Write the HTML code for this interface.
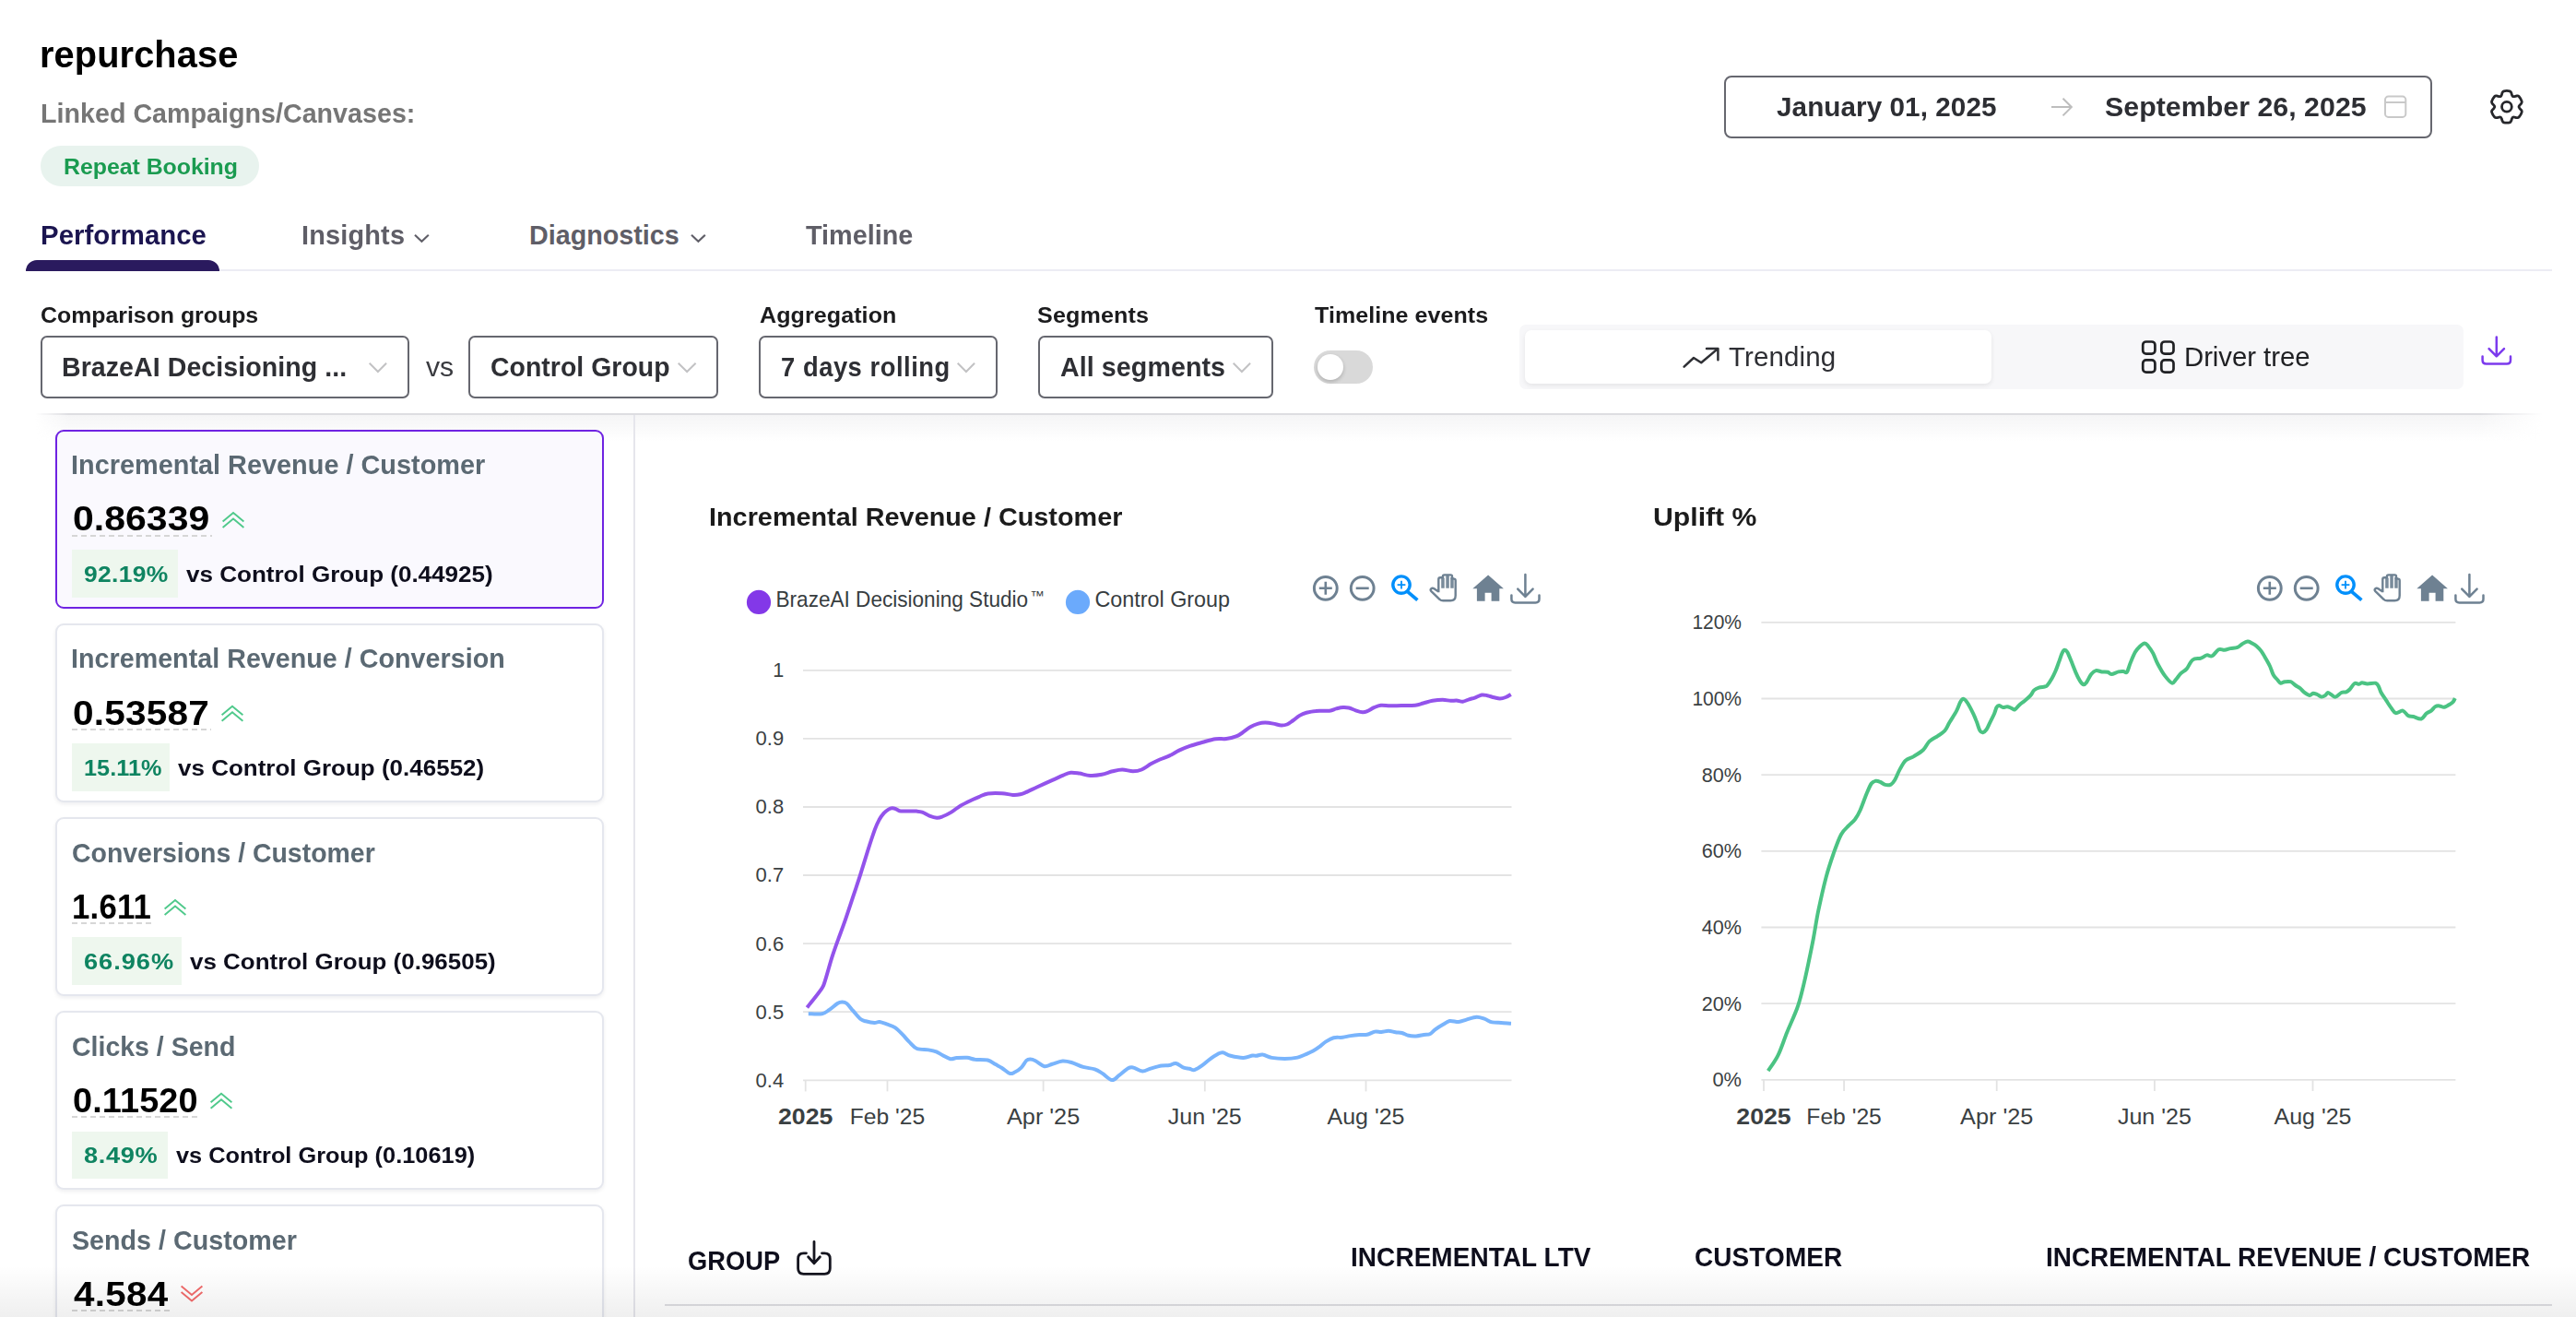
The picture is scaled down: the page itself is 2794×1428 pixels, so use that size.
<!DOCTYPE html>
<html lang="en"><head><meta charset="utf-8"><title>repurchase</title>
<style>
html,body{margin:0;padding:0;background:#fff;}
body{width:2794px;height:1428px;position:relative;overflow:hidden;font-family:"Liberation Sans",sans-serif;}
.t{position:absolute;white-space:nowrap;line-height:1;transform-origin:0 0;}
.abs{position:absolute;}
.sel{position:absolute;box-sizing:border-box;border:2px solid #66676f;border-radius:7px;background:#fff;}
.card{position:absolute;left:60px;width:595px;box-sizing:border-box;border:2px solid #e5e7ee;border-radius:9px;background:#fff;box-shadow:0 2px 4px rgba(20,20,40,.07);}
.card.on{border-color:#6f23e2;background:#faf9fe;box-shadow:none;}
.badge{position:absolute;background:#eef7ee;}
.dash{position:absolute;height:2px;background:repeating-linear-gradient(90deg,#d6d6d6 0 6px,transparent 6px 10px);}
svg{position:absolute;overflow:visible;}
</style></head><body>

<header>
<span class="t" id="h1" style="left:43.0px;top:38.6px;font-size:40.5px;font-weight:700;color:#000;transform:scaleX(0.9815);letter-spacing:0.111px;">repurchase</span>
<span class="t" id="lk" style="left:43.5px;top:106.5px;font-size:30.4px;font-weight:700;color:#767676;transform:scaleX(0.9427);letter-spacing:0.016px;">Linked Campaigns/Canvases:</span>
<div class="abs" style="left:43.7px;top:158.2px;width:237.3px;height:43.7px;border-radius:22px;background:#e8f3ee"></div>
<span class="t" id="pill" style="left:68.5px;top:170.0px;font-size:23.3px;font-weight:700;color:#1a9b50;transform:scaleX(1.0680);letter-spacing:-0.032px;">Repeat Booking</span>
<div class="sel" style="left:1870px;top:82px;width:768px;height:68px;border-radius:8px"></div>
<span class="t" id="d1" style="left:1927.0px;top:101.7px;font-size:28.6px;font-weight:700;color:#2d2e33;transform:scaleX(1.0380);letter-spacing:0.054px;">January 01, 2025</span>
<span class="t" id="d2" style="left:2282.5px;top:101.7px;font-size:28.6px;font-weight:700;color:#2d2e33;transform:scaleX(1.0598);letter-spacing:0.035px;">September 26, 2025</span>
<svg style="left:2220px;top:100px" width="32" height="32" viewBox="2220 100 32 32"><path d="M2225,116.1H2246.5M2237.5,106.8L2246.8,116.1L2237.5,125.4" fill="none" stroke="#bdbdbd" stroke-width="2"/></svg>
<svg style="left:2580px;top:98px" width="36" height="36" viewBox="2580 98 36 36"><rect x="2587" y="104.6" width="22.3" height="22.3" rx="3.5" fill="none" stroke="#c9c9c9" stroke-width="2"/><path d="M2587,111H2609.3" stroke="#c9c9c9" stroke-width="2"/></svg>
<svg style="left:2695px;top:92px" width="48" height="48" viewBox="2695 92 48 48"><path d="M2715.75,98.79C2717.07,98.50 2720.73,98.50 2722.05,98.79C2723.38,99.08 2723.31,99.85 2723.71,100.54C2724.12,101.24 2724.19,102.31 2724.48,102.96C2724.77,103.61 2724.99,104.19 2725.45,104.46C2725.91,104.72 2726.52,104.62 2727.23,104.55C2727.94,104.47 2728.90,104.00 2729.71,104.00C2730.51,104.01 2731.14,103.56 2732.06,104.56C2732.97,105.57 2734.80,108.73 2735.21,110.03C2735.62,111.32 2734.92,111.64 2734.52,112.34C2734.12,113.04 2733.23,113.64 2732.81,114.22C2732.39,114.79 2732.00,115.27 2732.00,115.80C2732.00,116.33 2732.39,116.81 2732.81,117.38C2733.23,117.96 2734.12,118.56 2734.52,119.26C2734.92,119.96 2735.62,120.28 2735.21,121.57C2734.80,122.87 2732.97,126.03 2732.06,127.04C2731.14,128.04 2730.51,127.59 2729.71,127.60C2728.90,127.60 2727.94,127.13 2727.23,127.05C2726.52,126.98 2725.91,126.88 2725.45,127.14C2724.99,127.41 2724.77,127.99 2724.48,128.64C2724.19,129.29 2724.12,130.36 2723.71,131.06C2723.31,131.75 2723.38,132.52 2722.05,132.81C2720.73,133.10 2717.07,133.10 2715.75,132.81C2714.42,132.52 2714.49,131.75 2714.09,131.06C2713.68,130.36 2713.61,129.29 2713.32,128.64C2713.03,127.99 2712.81,127.41 2712.35,127.14C2711.89,126.88 2711.28,126.98 2710.57,127.05C2709.86,127.13 2708.90,127.60 2708.09,127.60C2707.29,127.59 2706.66,128.04 2705.74,127.04C2704.83,126.03 2703.00,122.87 2702.59,121.57C2702.18,120.28 2702.88,119.96 2703.28,119.26C2703.68,118.56 2704.57,117.96 2704.99,117.38C2705.41,116.81 2705.80,116.33 2705.80,115.80C2705.80,115.27 2705.41,114.79 2704.99,114.22C2704.57,113.64 2703.68,113.04 2703.28,112.34C2702.88,111.64 2702.18,111.32 2702.59,110.03C2703.00,108.73 2704.83,105.57 2705.74,104.56C2706.66,103.56 2707.29,104.01 2708.09,104.00C2708.90,104.00 2709.86,104.47 2710.57,104.55C2711.28,104.62 2711.89,104.72 2712.35,104.46C2712.81,104.19 2713.03,103.61 2713.32,102.96C2713.61,102.31 2713.68,101.24 2714.09,100.54C2714.49,99.85 2714.42,99.08 2715.75,98.79Z" fill="none" stroke="#26272b" stroke-width="2.8" stroke-linejoin="round"/><circle cx="2718.9" cy="115.8" r="5.4" fill="none" stroke="#26272b" stroke-width="2.8"/></svg>
</header>
<nav>
<div class="abs" style="left:28px;top:291.8px;width:2740px;height:2px;background:#ececf4"></div>
<div class="abs" style="left:27.8px;top:281.7px;width:210.2px;height:12.2px;border-radius:12px 12px 0 0;background:#2a1a5e"></div>
<span class="t" id="tb1" style="left:43.5px;top:240.7px;font-size:28.7px;font-weight:700;color:#1b1550;transform:scaleX(1.0237);letter-spacing:0.040px;">Performance</span>
<span class="t" id="tb2" style="left:326.5px;top:240.7px;font-size:28.7px;font-weight:700;color:#5f5e67;transform:scaleX(1.0074);letter-spacing:0.170px;">Insights</span>
<span class="t" id="tb3" style="left:574.0px;top:240.7px;font-size:28.7px;font-weight:700;color:#5f5e67;">Diagnostics</span>
<span class="t" id="tb4" style="left:874.0px;top:240.7px;font-size:28.7px;font-weight:700;color:#5f5e67;transform:scaleX(1.0043);">Timeline</span>
<svg style="left:447.3px;top:250px" width="22" height="16" viewBox="447.3 250 22 16"><path d="M450.3,254.8L457.7,261.8L465.1,254.8" fill="none" stroke="#5f5e67" stroke-width="2.1"/></svg>
<svg style="left:746.6px;top:250px" width="22" height="16" viewBox="746.6 250 22 16"><path d="M749.6,254.8L757.0,261.8L764.4,254.8" fill="none" stroke="#5f5e67" stroke-width="2.1"/></svg>
</nav>
<section>
<span class="t" id="f1" style="left:43.5px;top:330.1px;font-size:24.6px;font-weight:700;color:#1b1b1d;transform:scaleX(1.0116);letter-spacing:-0.013px;">Comparison groups</span>
<span class="t" id="f2" style="left:824.0px;top:330.1px;font-size:24.6px;font-weight:700;color:#1b1b1d;transform:scaleX(1.0187);letter-spacing:0.080px;">Aggregation</span>
<span class="t" id="f3" style="left:1125.0px;top:330.1px;font-size:24.6px;font-weight:700;color:#1b1b1d;transform:scaleX(1.0214);letter-spacing:0.143px;">Segments</span>
<span class="t" id="f4" style="left:1426.0px;top:330.1px;font-size:24.6px;font-weight:700;color:#1b1b1d;transform:scaleX(1.0163);letter-spacing:0.071px;">Timeline events</span>
<div class="sel" style="left:44.1px;top:364.2px;width:399.6px;height:67.6px"></div>
<div class="sel" style="left:508.1px;top:364.2px;width:270.8px;height:67.6px"></div>
<div class="sel" style="left:823.2px;top:364.2px;width:258.6px;height:67.6px"></div>
<div class="sel" style="left:1126.1px;top:364.2px;width:254.6px;height:67.6px"></div>
<span class="t" id="s1" style="left:67.0px;top:383.5px;font-size:29px;font-weight:700;color:#2e2f34;transform:scaleX(0.9848);letter-spacing:0.055px;">BrazeAI Decisioning ...</span>
<span class="t" id="s2" style="left:532.0px;top:383.5px;font-size:29px;font-weight:700;color:#2e2f34;transform:scaleX(0.9782);letter-spacing:0.066px;">Control Group</span>
<span class="t" id="s3" style="left:846.5px;top:383.5px;font-size:29px;font-weight:700;color:#2e2f34;transform:scaleX(0.9422);letter-spacing:0.584px;">7 days rolling</span>
<span class="t" id="s4" style="left:1150.0px;top:383.5px;font-size:29px;font-weight:700;color:#2e2f34;transform:scaleX(0.9861);letter-spacing:0.091px;">All segments</span>
<svg style="left:398px;top:388px" width="26" height="20" viewBox="398 388 26 20"><path d="M400.7,393.8L409.9,403L419.1,393.8" fill="none" stroke="#c2c2c4" stroke-width="2"/></svg>
<svg style="left:732.9px;top:388px" width="26" height="20" viewBox="732.9 388 26 20"><path d="M735.6,393.8L745.05,403L754.5,393.8" fill="none" stroke="#c2c2c4" stroke-width="2"/></svg>
<svg style="left:1036.4px;top:388px" width="26" height="20" viewBox="1036.4 388 26 20"><path d="M1039.1000000000001,393.8L1048.3000000000002,403L1057.5,393.8" fill="none" stroke="#c2c2c4" stroke-width="2"/></svg>
<svg style="left:1335.1px;top:388px" width="26" height="20" viewBox="1335.1 388 26 20"><path d="M1337.8,393.8L1347.0,403L1356.2,393.8" fill="none" stroke="#c2c2c4" stroke-width="2"/></svg>
<span class="t" id="vs" style="left:461.5px;top:383.1px;font-size:29.5px;font-weight:400;color:#3a3b40;transform:scaleX(1.0241);letter-spacing:-0.200px;">vs</span>
<div class="abs" style="left:1425.4px;top:380px;width:63.6px;height:36px;border-radius:18px;background:#d9d9d9"></div>
<div class="abs" style="left:1428.9px;top:384px;width:28px;height:28px;border-radius:14px;background:#fff;box-shadow:0 2px 4px rgba(0,0,0,.2)"></div>
<div class="abs" style="left:1648.2px;top:352.1px;width:1023.8px;height:69.9px;border-radius:7px;background:#f7f7f9"></div>
<div class="abs" style="left:1654px;top:358px;width:505.9px;height:57.7px;border-radius:7px;background:#fff;box-shadow:0 2px 5px rgba(0,0,0,.08)"></div>
<svg style="left:1820px;top:370px" width="50" height="36" viewBox="1820 370 50 36"><path d="M1826.6,397.7L1837,388L1845.2,393.2L1862.6,378.6M1851,377.9H1863.4V390.2" fill="none" stroke="#2e2f34" stroke-width="2.5" stroke-linecap="round" stroke-linejoin="round"/></svg>
<span class="t" id="sg1" style="left:1875.0px;top:372.8px;font-size:28.7px;font-weight:400;color:#2e2f34;transform:scaleX(1.0288);letter-spacing:0.116px;">Trending</span>
<svg style="left:2318px;top:364px" width="46" height="46" viewBox="2318 364 46 46"><g fill="none" stroke="#202124" stroke-width="2.7"><rect x="2324.2" y="370.5" width="13.2" height="13.2" rx="3.6"/><rect x="2344.3" y="370.5" width="13.2" height="13.2" rx="3.6"/><rect x="2324.2" y="390.4" width="13.2" height="13.2" rx="3.6"/><rect x="2344.3" y="390.4" width="13.2" height="13.2" rx="3.6"/></g></svg>
<span class="t" id="sg2" style="left:2369.0px;top:372.8px;font-size:28.7px;font-weight:400;color:#202124;transform:scaleX(1.0221);letter-spacing:-0.040px;">Driver tree</span>
<svg style="left:2686px;top:358.9px" width="44" height="42" viewBox="2686 358 44 42"><path d="M2707.8,364.5V385.2M2699.6,377.2L2707.8,385.4L2716,377.2M2692.6,385.5V389.5Q2692.6,393.5 2696.6,393.5H2719Q2723,393.5 2723,389.5V385.5" fill="none" stroke="#7c3aed" stroke-width="2.5" stroke-linecap="round" stroke-linejoin="round"/></svg>
<div class="abs" style="left:30px;top:447.8px;width:2740px;height:30px;background:linear-gradient(180deg,#dddde1 0,#dddde1 2px,#f5f5f6 2.5px,rgba(255,255,255,0) 100%);-webkit-mask-image:linear-gradient(90deg,transparent 8px,#000 45px,#000 2660px,transparent 2728px);mask-image:linear-gradient(90deg,transparent 8px,#000 45px,#000 2660px,transparent 2728px)"></div>
</section>
<div class="abs" style="left:687px;top:450px;width:2px;height:980px;background:#e6e6ec"></div>
<aside>
<div class="card on" style="top:465.9px;height:194px"></div>
<span class="t" id="c0t" style="left:77.0px;top:489.4px;font-size:29.4px;font-weight:700;color:#5b6973;transform:scaleX(0.9824);">Incremental Revenue / Customer</span>
<span class="t" id="c0v" style="left:78.5px;top:545.4px;font-size:36.4px;font-weight:700;color:#000;transform:scaleX(1.1254);letter-spacing:0.033px;">0.86339</span>
<div class="dash" style="left:78px;top:579.8px;width:151.8px"></div>
<svg style="left:239.3px;top:552.9px" width="28" height="22" viewBox="239.3 552.9 28 22"><path d="M241.9,565.3L253.3,555.8L264.7,565.3M241.9,571.8L253.3,562.3L264.7,571.8" fill="none" stroke="#4fc98b" stroke-width="1.9"/></svg>
<div class="badge" style="left:78px;top:596.3px;width:114.6px;height:51.4px"></div>
<span class="t" id="c0p" style="left:90.5px;top:610.5px;font-size:24.1px;font-weight:700;color:#0f8461;transform:scaleX(1.0963);letter-spacing:0.320px;">92.19%</span>
<span class="t" id="c0s" style="left:201.5px;top:610.5px;font-size:24.2px;font-weight:700;color:#0e0e1c;transform:scaleX(1.0776);letter-spacing:-0.016px;">vs Control Group (0.44925)</span>
<div class="card" style="top:676.0px;height:194px"></div>
<span class="t" id="c1t" style="left:77.0px;top:699.4px;font-size:29.4px;font-weight:700;color:#5b6973;transform:scaleX(0.9749);letter-spacing:0.032px;">Incremental Revenue / Conversion</span>
<span class="t" id="c1v" style="left:78.5px;top:755.5px;font-size:36.4px;font-weight:700;color:#000;transform:scaleX(1.1154);letter-spacing:0.167px;">0.53587</span>
<div class="dash" style="left:78px;top:789.8px;width:150.5px"></div>
<svg style="left:238.0px;top:763.0px" width="28" height="22" viewBox="238.0 763.0 28 22"><path d="M240.6,775.35L252.0,765.85L263.4,775.35M240.6,781.85L252.0,772.35L263.4,781.85" fill="none" stroke="#4fc98b" stroke-width="1.9"/></svg>
<div class="badge" style="left:78px;top:806.3px;width:106.2px;height:51.4px"></div>
<span class="t" id="c1p" style="left:90.5px;top:820.6px;font-size:24.1px;font-weight:700;color:#0f8461;transform:scaleX(1.0481);letter-spacing:0.040px;">15.11%</span>
<span class="t" id="c1s" style="left:192.5px;top:820.5px;font-size:24.2px;font-weight:700;color:#0e0e1c;transform:scaleX(1.0718);letter-spacing:0.032px;">vs Control Group (0.46552)</span>
<div class="card" style="top:886.0px;height:194px"></div>
<span class="t" id="c2t" style="left:78.0px;top:909.5px;font-size:29.4px;font-weight:700;color:#5b6973;transform:scaleX(0.9676);">Conversions / Customer</span>
<span class="t" id="c2v" style="left:77.5px;top:965.5px;font-size:36.4px;font-weight:700;color:#000;transform:scaleX(0.9563);letter-spacing:0.200px;">1.611</span>
<div class="dash" style="left:78px;top:999.9px;width:88.7px"></div>
<svg style="left:176.2px;top:973.0px" width="28" height="22" viewBox="176.2 973.0 28 22"><path d="M178.79999999999998,985.4L190.2,975.9L201.6,985.4M178.79999999999998,991.9L190.2,982.4L201.6,991.9" fill="none" stroke="#4fc98b" stroke-width="1.9"/></svg>
<div class="badge" style="left:78px;top:1016.4px;width:119.1px;height:51.4px"></div>
<span class="t" id="c2p" style="left:90.5px;top:1030.6px;font-size:24.1px;font-weight:700;color:#0f8461;transform:scaleX(1.1300);letter-spacing:0.840px;">66.96%</span>
<span class="t" id="c2s" style="left:206.0px;top:1030.6px;font-size:24.2px;font-weight:700;color:#0e0e1c;transform:scaleX(1.0709);letter-spacing:0.024px;">vs Control Group (0.96505)</span>
<div class="card" style="top:1096.1px;height:194px"></div>
<span class="t" id="c3t" style="left:78.0px;top:1119.5px;font-size:29.4px;font-weight:700;color:#5b6973;transform:scaleX(0.9694);">Clicks / Send</span>
<span class="t" id="c3v" style="left:78.5px;top:1175.6px;font-size:36.4px;font-weight:700;color:#000;transform:scaleX(1.0406);letter-spacing:0.132px;">0.11520</span>
<div class="dash" style="left:78px;top:1210.0px;width:138.7px"></div>
<svg style="left:226.2px;top:1183.1px" width="28" height="22" viewBox="226.2 1183.1 28 22"><path d="M228.79999999999998,1195.4500000000003L240.2,1185.9500000000003L251.6,1195.4500000000003M228.79999999999998,1201.9500000000003L240.2,1192.4500000000003L251.6,1201.9500000000003" fill="none" stroke="#4fc98b" stroke-width="1.9"/></svg>
<div class="badge" style="left:78px;top:1226.5px;width:103.9px;height:51.4px"></div>
<span class="t" id="c3p" style="left:90.5px;top:1240.7px;font-size:24.1px;font-weight:700;color:#0f8461;transform:scaleX(1.1300);letter-spacing:0.550px;">8.49%</span>
<span class="t" id="c3s" style="left:191.0px;top:1240.6px;font-size:24.2px;font-weight:700;color:#0e0e1c;transform:scaleX(1.0466);letter-spacing:0.024px;">vs Control Group (0.10619)</span>
<div class="card" style="top:1306.1px;height:194px"></div>
<span class="t" id="c4t" style="left:78.0px;top:1329.6px;font-size:29.4px;font-weight:700;color:#5b6973;transform:scaleX(0.9743);letter-spacing:0.026px;">Sends / Customer</span>
<span class="t" id="c4v" style="left:79.5px;top:1385.6px;font-size:36.4px;font-weight:700;color:#000;transform:scaleX(1.1087);letter-spacing:0.250px;">4.584</span>
<div class="dash" style="left:78px;top:1420.0px;width:107.5px"></div>
<svg style="left:194.1px;top:1392.3px" width="28" height="22" viewBox="194.1 1392.3 28 22"><path d="M196.7,1394.8999999999999L208.1,1404.3999999999999L219.5,1394.8999999999999M196.7,1401.3999999999999L208.1,1410.8999999999999L219.5,1401.3999999999999" fill="none" stroke="#f26b6b" stroke-width="1.9"/></svg>
</aside>
<main>
<span class="t" id="ct1" style="left:768.5px;top:546.3px;font-size:28.3px;font-weight:700;color:#1b1b1b;transform:scaleX(1.0155);letter-spacing:0.042px;">Incremental Revenue / Customer</span>
<span class="t" id="ct2" style="left:1792.5px;top:546.3px;font-size:28.3px;font-weight:700;color:#1b1b1b;transform:scaleX(1.0673);">Uplift %</span>
<svg style="left:0;top:0" width="2794" height="1428" viewBox="0 0 2794 1428" font-family="Liberation Sans, sans-serif">
<path d="M871,726.8H1639.5" stroke="#e3e3e3" stroke-width="1.8"/>
<text x="850.2" y="734.2" text-anchor="end" font-size="21.6" fill="#3a4042">1</text>
<path d="M871,800.9H1639.5" stroke="#e3e3e3" stroke-width="1.8"/>
<text x="850.2" y="808.3" text-anchor="end" font-size="21.6" fill="#3a4042" textLength="30.6" lengthAdjust="spacingAndGlyphs">0.9</text>
<path d="M871,875.0H1639.5" stroke="#e3e3e3" stroke-width="1.8"/>
<text x="850.2" y="882.4" text-anchor="end" font-size="21.6" fill="#3a4042" textLength="30.6" lengthAdjust="spacingAndGlyphs">0.8</text>
<path d="M871,949.0H1639.5" stroke="#e3e3e3" stroke-width="1.8"/>
<text x="850.2" y="956.4" text-anchor="end" font-size="21.6" fill="#3a4042" textLength="30.6" lengthAdjust="spacingAndGlyphs">0.7</text>
<path d="M871,1023.1H1639.5" stroke="#e3e3e3" stroke-width="1.8"/>
<text x="850.2" y="1030.5" text-anchor="end" font-size="21.6" fill="#3a4042" textLength="30.6" lengthAdjust="spacingAndGlyphs">0.6</text>
<path d="M871,1097.2H1639.5" stroke="#e3e3e3" stroke-width="1.8"/>
<text x="850.2" y="1104.6" text-anchor="end" font-size="21.6" fill="#3a4042" textLength="30.6" lengthAdjust="spacingAndGlyphs">0.5</text>
<path d="M871,1171.3H1639.5" stroke="#e3e3e3" stroke-width="1.8"/>
<text x="850.2" y="1178.7" text-anchor="end" font-size="21.6" fill="#3a4042" textLength="30.6" lengthAdjust="spacingAndGlyphs">0.4</text>
<path d="M873.7,1171.3V1183.4" stroke="#e3e3e3" stroke-width="1.8"/>
<path d="M962.5,1171.3V1183.4" stroke="#e3e3e3" stroke-width="1.8"/>
<path d="M1131.6,1171.3V1183.4" stroke="#e3e3e3" stroke-width="1.8"/>
<path d="M1306.8,1171.3V1183.4" stroke="#e3e3e3" stroke-width="1.8"/>
<path d="M1481.5,1171.3V1183.4" stroke="#e3e3e3" stroke-width="1.8"/>
<text x="873.7" y="1219" text-anchor="middle" font-size="24" font-weight="700" fill="#3a4042" textLength="59.4" lengthAdjust="spacingAndGlyphs">2025</text>
<text x="962.5" y="1219" text-anchor="middle" font-size="24" fill="#3a4042" textLength="81.5" lengthAdjust="spacingAndGlyphs">Feb '25</text>
<text x="1131.6" y="1219" text-anchor="middle" font-size="24" fill="#3a4042" textLength="79.2" lengthAdjust="spacingAndGlyphs">Apr '25</text>
<text x="1306.8" y="1219" text-anchor="middle" font-size="24" fill="#3a4042" textLength="80" lengthAdjust="spacingAndGlyphs">Jun '25</text>
<text x="1481.5" y="1219" text-anchor="middle" font-size="24" fill="#3a4042" textLength="84" lengthAdjust="spacingAndGlyphs">Aug '25</text>
<path d="M1910.4,674.8H2663.4" stroke="#e3e3e3" stroke-width="1.8"/>
<text x="1889" y="682.2" text-anchor="end" font-size="21.6" fill="#3a4042" textLength="53.6" lengthAdjust="spacingAndGlyphs">120%</text>
<path d="M1910.4,757.5H2663.4" stroke="#e3e3e3" stroke-width="1.8"/>
<text x="1889" y="764.9" text-anchor="end" font-size="21.6" fill="#3a4042" textLength="53.6" lengthAdjust="spacingAndGlyphs">100%</text>
<path d="M1910.4,840.2H2663.4" stroke="#e3e3e3" stroke-width="1.8"/>
<text x="1889" y="847.6" text-anchor="end" font-size="21.6" fill="#3a4042" textLength="43.2" lengthAdjust="spacingAndGlyphs">80%</text>
<path d="M1910.4,922.8H2663.4" stroke="#e3e3e3" stroke-width="1.8"/>
<text x="1889" y="930.2" text-anchor="end" font-size="21.6" fill="#3a4042" textLength="43.2" lengthAdjust="spacingAndGlyphs">60%</text>
<path d="M1910.4,1005.5H2663.4" stroke="#e3e3e3" stroke-width="1.8"/>
<text x="1889" y="1012.9" text-anchor="end" font-size="21.6" fill="#3a4042" textLength="43.2" lengthAdjust="spacingAndGlyphs">40%</text>
<path d="M1910.4,1088.2H2663.4" stroke="#e3e3e3" stroke-width="1.8"/>
<text x="1889" y="1095.6" text-anchor="end" font-size="21.6" fill="#3a4042" textLength="43.2" lengthAdjust="spacingAndGlyphs">20%</text>
<path d="M1910.4,1170.9H2663.4" stroke="#e3e3e3" stroke-width="1.8"/>
<text x="1889" y="1178.3" text-anchor="end" font-size="21.6" fill="#3a4042" textLength="31.5" lengthAdjust="spacingAndGlyphs">0%</text>
<path d="M1913,1170.9V1183" stroke="#e3e3e3" stroke-width="1.8"/>
<path d="M2000.1,1170.9V1183" stroke="#e3e3e3" stroke-width="1.8"/>
<path d="M2165.7,1170.9V1183" stroke="#e3e3e3" stroke-width="1.8"/>
<path d="M2336.9,1170.9V1183" stroke="#e3e3e3" stroke-width="1.8"/>
<path d="M2508.5,1170.9V1183" stroke="#e3e3e3" stroke-width="1.8"/>
<text x="1913" y="1219" text-anchor="middle" font-size="24" font-weight="700" fill="#3a4042" textLength="59.4" lengthAdjust="spacingAndGlyphs">2025</text>
<text x="2000.1" y="1219" text-anchor="middle" font-size="24" fill="#3a4042" textLength="81.5" lengthAdjust="spacingAndGlyphs">Feb '25</text>
<text x="2165.7" y="1219" text-anchor="middle" font-size="24" fill="#3a4042" textLength="79.2" lengthAdjust="spacingAndGlyphs">Apr '25</text>
<text x="2336.9" y="1219" text-anchor="middle" font-size="24" fill="#3a4042" textLength="80" lengthAdjust="spacingAndGlyphs">Jun '25</text>
<text x="2508.5" y="1219" text-anchor="middle" font-size="24" fill="#3a4042" textLength="84" lengthAdjust="spacingAndGlyphs">Aug '25</text>
<path d="M875.4,1092.5C877.9,1089.2 887.4,1077.5 890.6,1072.8C893.8,1068.1 892.6,1070.2 894.6,1064.3C896.6,1058.4 900.0,1045.3 902.5,1037.6C905.0,1029.9 906.9,1024.8 909.4,1017.9C911.9,1011.0 914.7,1003.7 917.3,996.1C919.9,988.5 922.6,980.3 925.2,972.4C927.8,964.5 930.5,956.9 933.1,948.7C935.7,940.5 938.4,931.3 941.0,923.1C943.6,914.9 946.8,905.2 948.9,899.4C951.0,893.6 952.2,891.5 953.8,888.5C955.4,885.5 957.1,883.4 958.7,881.6C960.4,879.8 962.2,878.5 963.7,877.6C965.2,876.7 966.3,876.4 967.6,876.3C968.9,876.2 970.3,876.6 971.6,877.1C972.9,877.6 973.7,878.8 975.5,879.2C977.3,879.6 979.3,879.5 982.4,879.6C985.5,879.7 991.3,879.4 994.3,879.6C997.3,879.8 997.9,879.8 1000.2,880.6C1002.5,881.4 1005.5,883.6 1008.1,884.6C1010.7,885.6 1013.7,886.6 1016.0,886.7C1018.3,886.9 1019.3,886.5 1021.9,885.5C1024.5,884.5 1028.5,882.6 1031.8,880.6C1035.1,878.6 1037.8,876.0 1041.7,873.7C1045.7,871.4 1052.0,868.5 1055.5,866.8C1059.0,865.1 1060.3,864.6 1063.0,863.5C1065.7,862.4 1067.6,860.9 1071.6,860.4C1075.6,859.9 1082.3,860.0 1086.8,860.2C1091.3,860.5 1095.1,861.7 1098.4,861.9C1101.7,862.1 1104.3,861.8 1106.6,861.3C1108.9,860.8 1109.3,860.6 1112.4,859.2C1115.5,857.9 1120.4,855.4 1125.2,853.2C1130.0,851.0 1136.8,848.0 1141.5,845.9C1146.2,843.8 1149.9,842.0 1153.2,840.6C1156.5,839.2 1158.4,838.1 1161.3,837.8C1164.2,837.5 1167.1,838.1 1170.6,838.6C1174.1,839.1 1178.2,840.7 1182.3,840.9C1186.4,841.1 1191.0,840.6 1195.1,839.8C1199.2,839.0 1203.0,837.2 1206.7,836.3C1210.4,835.4 1213.5,834.5 1217.2,834.5C1220.9,834.5 1225.4,836.3 1228.9,836.3C1232.4,836.3 1234.9,835.9 1238.2,834.5C1241.5,833.1 1245.4,829.9 1248.7,828.1C1252.0,826.3 1254.7,825.0 1258.0,823.5C1261.3,822.0 1265.0,821.0 1268.5,819.4C1272.0,817.8 1275.2,815.4 1278.9,813.6C1282.6,811.9 1286.3,810.4 1290.6,808.9C1294.9,807.4 1299.9,806.1 1304.6,804.8C1309.2,803.5 1314.2,801.9 1318.5,801.3C1322.8,800.7 1326.5,801.5 1330.2,801.0C1333.9,800.5 1337.8,799.5 1340.7,798.4C1343.6,797.3 1344.9,796.2 1347.5,794.5C1350.1,792.8 1353.2,789.9 1356.1,788.3C1359.0,786.6 1362.1,785.4 1364.8,784.6C1367.5,783.8 1369.6,783.6 1372.3,783.6C1375.0,783.6 1378.1,784.1 1381.0,784.6C1383.9,785.1 1387.2,786.4 1389.7,786.5C1392.2,786.6 1393.8,786.3 1395.9,785.5C1398.0,784.7 1399.8,783.1 1402.1,781.5C1404.4,779.9 1407.1,777.4 1409.6,775.9C1412.1,774.4 1414.1,773.6 1417.0,772.8C1419.9,772.0 1422.8,771.2 1427.0,770.9C1431.2,770.5 1438.2,771.1 1441.9,770.7C1445.6,770.3 1446.8,769.0 1449.3,768.4C1451.8,767.8 1454.5,767.1 1456.8,767.0C1459.1,766.9 1460.7,767.0 1463.0,767.5C1465.3,768.0 1467.9,769.5 1470.4,770.3C1472.9,771.1 1475.8,772.1 1477.9,772.2C1480.0,772.4 1480.8,772.0 1482.9,771.2C1485.0,770.4 1487.8,768.3 1490.3,767.2C1492.8,766.1 1494.9,765.0 1497.8,764.7C1500.7,764.4 1504.0,765.2 1507.7,765.3C1511.4,765.3 1515.5,765.1 1520.1,765.0C1524.6,764.9 1531.1,765.1 1535.0,764.7C1538.9,764.3 1540.6,763.3 1543.7,762.5C1546.8,761.7 1550.2,760.4 1553.7,759.8C1557.2,759.2 1561.5,758.8 1564.8,758.8C1568.1,758.8 1571.0,759.7 1573.5,759.8C1576.0,759.9 1577.6,759.4 1579.8,759.5C1582.0,759.6 1584.3,760.9 1586.6,760.7C1588.9,760.5 1591.2,759.0 1593.4,758.3C1595.6,757.6 1597.3,757.4 1599.6,756.6C1601.9,755.8 1604.8,753.9 1607.1,753.5C1609.4,753.1 1611.0,753.7 1613.3,754.2C1615.6,754.7 1618.4,755.8 1620.7,756.3C1623.0,756.8 1624.8,757.5 1626.9,757.5C1629.0,757.5 1631.2,756.8 1633.2,756.0C1635.2,755.2 1637.9,753.4 1638.8,752.9" fill="none" stroke="#9353eb" stroke-width="4" stroke-linecap="butt" stroke-linejoin="round"/>
<path d="M876.8,1099.2C879.3,1099.2 887.8,1099.9 891.6,1099.2C895.4,1098.5 896.7,1096.8 899.5,1094.9C902.3,1093.0 906.1,1089.4 908.4,1088.0C910.7,1086.6 911.6,1086.6 913.3,1086.6C914.9,1086.6 916.3,1086.5 918.3,1088.0C920.3,1089.5 922.7,1093.1 925.2,1095.9C927.7,1098.7 930.8,1102.9 933.1,1104.8C935.4,1106.7 936.5,1106.6 939.0,1107.3C941.5,1108.0 945.9,1109.0 948.4,1109.1C950.9,1109.2 951.7,1107.7 954.0,1108.0C956.3,1108.3 959.6,1109.7 962.4,1110.7C965.2,1111.7 967.9,1112.3 970.7,1114.2C973.5,1116.1 976.5,1119.3 979.1,1121.9C981.7,1124.5 983.5,1127.1 986.1,1129.6C988.7,1132.1 991.0,1135.5 994.5,1137.0C998.0,1138.5 1003.6,1137.8 1007.1,1138.4C1010.6,1139.0 1012.9,1139.4 1015.5,1140.4C1018.1,1141.4 1020.0,1143.0 1022.5,1144.3C1025.0,1145.6 1028.2,1147.7 1030.8,1148.2C1033.3,1148.7 1034.8,1147.3 1037.8,1147.1C1040.8,1146.9 1045.7,1146.5 1049.0,1146.8C1052.3,1147.1 1053.7,1148.3 1057.4,1148.8C1061.1,1149.2 1067.7,1148.6 1071.4,1149.5C1075.1,1150.4 1077.2,1152.7 1079.7,1154.1C1082.2,1155.5 1084.1,1156.4 1086.7,1158.0C1089.3,1159.6 1092.8,1163.2 1095.1,1163.9C1097.4,1164.7 1098.6,1163.5 1100.7,1162.5C1102.8,1161.5 1105.6,1159.7 1107.7,1157.6C1109.8,1155.5 1111.7,1151.4 1113.3,1149.9C1114.9,1148.4 1115.9,1148.5 1117.5,1148.5C1119.1,1148.5 1120.5,1148.9 1123.1,1150.2C1125.7,1151.5 1129.9,1155.6 1132.9,1156.2C1135.9,1156.8 1138.0,1154.7 1141.2,1153.8C1144.5,1152.9 1148.9,1150.9 1152.4,1150.6C1155.9,1150.3 1158.5,1151.0 1162.2,1152.0C1165.9,1153.0 1170.6,1155.7 1174.8,1156.9C1179.0,1158.1 1183.9,1158.2 1187.4,1159.4C1190.9,1160.6 1192.6,1162.0 1195.7,1163.9C1198.8,1165.9 1203.2,1170.8 1206.2,1171.1C1209.2,1171.4 1211.0,1168.0 1213.9,1165.9C1216.8,1163.8 1221.1,1159.7 1223.7,1158.3C1226.3,1156.9 1226.7,1157.1 1229.3,1157.6C1231.9,1158.1 1235.8,1161.4 1239.1,1161.5C1242.3,1161.6 1245.3,1159.3 1248.8,1158.3C1252.3,1157.3 1256.7,1156.0 1260.0,1155.5C1263.3,1155.0 1265.8,1155.4 1268.4,1155.0C1271.0,1154.6 1272.8,1152.7 1275.4,1153.1C1278.0,1153.5 1281.4,1156.7 1283.8,1157.6C1286.2,1158.5 1288.0,1158.3 1290.0,1158.7C1292.0,1159.1 1293.3,1160.7 1295.6,1160.1C1297.9,1159.5 1301.2,1157.2 1304.0,1155.2C1306.8,1153.2 1309.6,1150.3 1312.4,1148.3C1315.2,1146.2 1318.4,1144.1 1320.7,1142.9C1323.0,1141.7 1324.0,1141.0 1326.3,1141.3C1328.6,1141.6 1331.0,1143.9 1334.7,1144.8C1338.4,1145.7 1344.7,1147.0 1348.7,1146.9C1352.7,1146.9 1356.2,1144.8 1358.5,1144.5C1360.8,1144.2 1360.8,1145.0 1362.7,1144.8C1364.6,1144.6 1366.9,1143.2 1369.7,1143.6C1372.5,1143.9 1375.5,1146.2 1379.4,1146.9C1383.4,1147.6 1388.7,1148.0 1393.4,1148.0C1398.1,1148.0 1403.7,1147.4 1407.4,1146.6C1411.1,1145.8 1413.0,1144.6 1415.8,1143.4C1418.6,1142.2 1421.7,1141.0 1424.2,1139.6C1426.8,1138.2 1428.8,1136.7 1431.1,1135.0C1433.4,1133.3 1435.5,1131.0 1438.1,1129.4C1440.7,1127.8 1443.5,1126.0 1446.5,1125.2C1449.5,1124.4 1453.3,1125.2 1456.3,1124.8C1459.3,1124.4 1461.7,1123.6 1464.7,1123.1C1467.7,1122.6 1471.5,1122.2 1474.5,1122.0C1477.5,1121.8 1480.1,1122.3 1482.9,1121.7C1485.7,1121.1 1488.7,1119.1 1491.2,1118.6C1493.8,1118.1 1495.8,1119.0 1498.2,1118.9C1500.7,1118.8 1503.3,1117.8 1505.9,1117.8C1508.5,1117.8 1511.1,1118.8 1513.6,1119.2C1516.0,1119.6 1518.3,1119.4 1520.6,1120.0C1522.9,1120.6 1525.0,1122.2 1527.6,1122.8C1530.2,1123.4 1533.2,1123.5 1536.0,1123.4C1538.8,1123.3 1541.8,1122.4 1544.3,1122.0C1546.8,1121.6 1549.2,1122.0 1551.3,1121.0C1553.4,1120.0 1554.6,1117.8 1556.9,1116.1C1559.2,1114.4 1562.7,1112.3 1565.3,1110.8C1567.9,1109.3 1569.5,1107.5 1572.3,1107.0C1575.1,1106.5 1579.1,1108.2 1582.1,1108.0C1585.1,1107.8 1587.2,1106.5 1590.5,1105.6C1593.8,1104.7 1598.3,1102.9 1601.6,1102.8C1604.8,1102.7 1607.2,1103.8 1610.0,1104.7C1612.8,1105.6 1615.4,1107.7 1618.4,1108.4C1621.4,1109.1 1624.8,1108.7 1628.2,1108.9C1631.6,1109.1 1637.2,1109.7 1639.0,1109.8" fill="none" stroke="#79b4fc" stroke-width="4" stroke-linejoin="round"/>
<path d="M1917.8,1161.1C1919.6,1158.2 1925.3,1150.9 1928.7,1143.9C1932.1,1136.9 1934.9,1127.7 1938.3,1119.3C1941.7,1110.9 1946.5,1100.8 1949.2,1093.3C1951.9,1085.8 1952.7,1082.4 1954.7,1074.2C1956.8,1066.0 1959.5,1053.7 1961.5,1044.1C1963.5,1034.5 1965.2,1026.4 1967.0,1016.8C1968.8,1007.2 1970.1,997.6 1972.4,986.7C1974.7,975.8 1977.9,961.5 1980.6,951.2C1983.3,941.0 1986.1,933.0 1988.8,925.2C1991.5,917.5 1994.3,909.7 1997.0,904.7C1999.7,899.7 2002.7,897.9 2005.2,895.2C2007.7,892.5 2010.0,891.0 2012.1,888.3C2014.1,885.6 2015.5,883.3 2017.5,878.8C2019.5,874.2 2022.4,865.9 2024.4,861.0C2026.5,856.1 2028.1,851.9 2029.8,849.5C2031.5,847.1 2032.9,847.1 2034.5,846.8C2036.1,846.5 2037.7,847.2 2039.4,847.9C2041.1,848.6 2042.9,850.4 2044.8,850.9C2046.7,851.4 2049.2,851.4 2050.9,850.6C2052.6,849.8 2053.4,848.6 2055.0,846.0C2056.6,843.4 2058.3,838.5 2060.3,834.9C2062.3,831.3 2064.2,827.1 2066.8,824.6C2069.4,822.1 2072.6,822.0 2075.8,820.1C2079.0,818.2 2083.3,815.7 2086.1,813.0C2088.9,810.3 2090.0,806.4 2092.6,803.9C2095.2,801.4 2098.8,800.0 2101.6,798.1C2104.4,796.2 2107.2,794.8 2109.4,792.3C2111.6,789.8 2112.3,786.9 2114.5,783.3C2116.7,779.6 2120.4,774.1 2122.3,770.4C2124.2,766.7 2125.0,763.4 2126.2,761.3C2127.4,759.2 2128.1,757.7 2129.4,757.8C2130.7,757.9 2132.1,759.3 2133.9,762.0C2135.7,764.7 2138.7,770.7 2140.4,774.2C2142.1,777.8 2143.0,780.3 2144.2,783.3C2145.4,786.3 2146.4,790.5 2147.5,792.3C2148.6,794.1 2149.5,794.4 2150.7,794.2C2151.9,794.0 2153.3,792.8 2154.6,791.0C2155.9,789.2 2157.0,786.1 2158.4,783.3C2159.8,780.5 2161.7,776.9 2162.9,774.2C2164.1,771.5 2164.6,768.7 2165.5,767.1C2166.4,765.5 2166.9,764.9 2168.1,764.9C2169.3,764.9 2171.1,766.9 2172.6,767.1C2174.1,767.3 2175.6,766.1 2177.1,766.2C2178.6,766.3 2180.3,767.3 2181.7,767.8C2183.1,768.3 2184.0,769.9 2185.5,769.3C2187.0,768.6 2189.0,765.4 2190.7,763.9C2192.4,762.4 2194.0,761.6 2195.9,760.0C2197.8,758.4 2200.6,756.1 2202.3,754.2C2204.0,752.3 2204.7,749.8 2206.2,748.4C2207.7,747.0 2209.5,746.2 2211.4,745.6C2213.3,745.0 2216.3,744.9 2217.8,744.5C2219.3,744.1 2219.1,744.7 2220.4,743.2C2221.7,741.7 2224.1,738.1 2225.6,735.5C2227.1,732.9 2228.1,730.8 2229.4,727.8C2230.7,724.8 2232.1,720.6 2233.3,717.4C2234.5,714.2 2235.5,710.5 2236.5,708.4C2237.5,706.3 2238.1,705.0 2239.1,704.8C2240.1,704.6 2241.1,705.2 2242.3,707.1C2243.5,709.0 2244.7,712.4 2246.2,716.1C2247.7,719.8 2249.8,725.4 2251.4,729.1C2253.0,732.8 2254.5,735.9 2255.9,738.1C2257.3,740.3 2258.6,741.9 2259.8,742.2C2261.0,742.5 2261.6,741.9 2263.0,740.0C2264.4,738.1 2266.5,733.1 2268.2,731.0C2269.9,728.9 2271.4,727.5 2273.3,727.1C2275.2,726.7 2277.7,728.1 2279.8,728.4C2282.0,728.7 2284.5,728.4 2286.2,728.8C2287.9,729.2 2288.2,731.1 2290.1,731.0C2292.0,730.9 2295.7,728.9 2297.8,728.4C2300.0,727.9 2301.5,727.9 2303.0,728.0C2304.5,728.1 2305.6,730.3 2306.9,728.8C2308.2,727.2 2309.2,722.3 2310.7,718.7C2312.2,715.1 2314.2,710.1 2315.9,707.1C2317.6,704.1 2319.4,702.3 2321.1,700.7C2322.8,699.1 2324.7,697.4 2326.2,697.4C2327.7,697.4 2328.6,698.9 2330.1,700.7C2331.6,702.5 2333.6,705.2 2335.3,708.4C2337.0,711.6 2338.2,715.9 2340.4,720.0C2342.6,724.1 2345.6,729.5 2348.2,732.9C2350.8,736.3 2353.8,740.0 2355.8,740.6C2357.8,741.2 2358.6,738.3 2360.2,736.6C2361.8,734.9 2363.5,732.1 2365.4,730.2C2367.3,728.3 2369.7,727.6 2371.8,725.1C2373.9,722.6 2375.6,717.4 2378.2,715.5C2380.8,713.6 2384.6,714.5 2387.2,713.6C2389.8,712.8 2391.6,710.8 2393.6,710.4C2395.6,710.0 2397.2,712.3 2399.3,711.3C2401.4,710.3 2404.2,705.4 2406.4,704.3C2408.7,703.2 2410.7,705.0 2412.8,704.8C2414.9,704.6 2416.8,703.6 2419.2,703.1C2421.5,702.6 2424.8,702.6 2426.9,701.8C2429.0,701.0 2430.2,699.3 2432.0,698.2C2433.8,697.1 2436.1,695.6 2437.8,695.4C2439.5,695.2 2440.6,696.4 2442.2,697.2C2443.8,698.1 2445.7,699.0 2447.4,700.5C2449.1,702.0 2450.8,703.6 2452.5,705.9C2454.2,708.2 2456.0,711.4 2457.6,714.2C2459.2,717.0 2460.7,719.5 2462.1,722.5C2463.5,725.5 2464.5,729.6 2465.9,732.1C2467.3,734.6 2469.1,735.9 2470.4,737.3C2471.7,738.7 2472.3,740.4 2473.6,740.7C2474.9,741.0 2476.3,739.5 2478.1,739.2C2479.9,739.0 2482.6,738.6 2484.5,739.2C2486.4,739.8 2487.9,741.8 2489.6,743.0C2491.3,744.2 2493.2,744.9 2494.8,746.2C2496.4,747.5 2497.5,749.4 2499.2,750.7C2500.9,752.0 2503.4,753.7 2505.0,753.9C2506.6,754.1 2507.5,751.9 2508.9,751.7C2510.3,751.6 2511.8,752.4 2513.3,753.0C2514.8,753.6 2516.3,755.5 2517.8,755.6C2519.3,755.8 2521.1,754.7 2522.3,753.9C2523.5,753.1 2523.8,751.1 2524.9,751.0C2526.0,750.9 2527.3,752.5 2528.7,753.3C2530.1,754.1 2531.4,756.0 2533.2,755.6C2535.0,755.2 2537.7,751.9 2539.6,751.0C2541.5,750.1 2543.2,751.0 2544.7,750.4C2546.2,749.8 2547.1,749.0 2548.6,747.5C2550.1,746.0 2552.0,742.1 2553.7,741.1C2555.4,740.1 2557.4,741.9 2558.8,741.7C2560.2,741.6 2560.5,740.2 2562.0,740.2C2563.5,740.2 2565.4,741.4 2567.8,741.5C2570.2,741.6 2574.7,740.2 2576.7,740.7C2578.7,741.2 2578.9,742.6 2579.9,744.3C2580.9,746.0 2581.1,748.1 2582.5,750.7C2583.9,753.3 2586.5,756.9 2588.3,759.7C2590.1,762.5 2591.7,765.2 2593.4,767.4C2595.1,769.6 2596.4,772.6 2598.5,773.1C2600.6,773.6 2603.9,770.1 2606.2,770.6C2608.4,771.1 2610.1,775.0 2612.0,776.1C2613.9,777.2 2615.3,776.4 2617.7,777.0C2620.0,777.6 2623.8,780.1 2626.1,779.5C2628.4,778.9 2630.0,775.0 2631.8,773.5C2633.6,772.0 2635.4,771.8 2637.0,770.6C2638.6,769.4 2639.9,767.0 2641.4,766.1C2642.9,765.2 2644.3,765.3 2645.9,765.4C2647.5,765.5 2649.1,767.0 2651.0,766.7C2652.9,766.4 2655.8,764.5 2657.4,763.5C2659.0,762.5 2659.8,762.1 2660.7,761.0C2661.6,759.9 2662.5,757.8 2662.8,757.1" fill="none" stroke="#4bc383" stroke-width="4" stroke-linejoin="round"/>
<circle cx="823" cy="652.9" r="13.1" fill="#8338e8"/>
<text x="841.5" y="657.9" font-size="24.6" fill="#373d3f" textLength="273.6" lengthAdjust="spacingAndGlyphs">BrazeAI Decisioning Studio</text>
<text x="1117.2" y="650.6" font-size="14.5" fill="#373d3f" textLength="15.6" lengthAdjust="spacingAndGlyphs">™</text>
<circle cx="1169" cy="652.9" r="13.1" fill="#6baafc"/>
<text x="1187.5" y="657.9" font-size="24.6" fill="#373d3f" textLength="146.5" lengthAdjust="spacingAndGlyphs">Control Group</text>
<g transform="translate(0,0)"><circle cx="1437.8" cy="637.8" r="12.4" fill="none" stroke="#6e8192" stroke-width="3"/><path d="M1430.8,637.8H1444.8M1437.8,630.8V644.8" stroke="#6e8192" stroke-width="2.6"/><circle cx="1477.7" cy="637.8" r="12.4" fill="none" stroke="#6e8192" stroke-width="3"/><path d="M1470.7,637.8H1484.7" stroke="#6e8192" stroke-width="2.6"/><circle cx="1520" cy="634.1" r="9.2" fill="none" stroke="#008ffb" stroke-width="3.4"/><path d="M1526.8,641.6L1537.4,650.6" stroke="#008ffb" stroke-width="3.8"/><path d="M1515.6,634.1H1524.4M1520,629.7V638.5" stroke="#008ffb" stroke-width="1.8"/><path d="M1560.3,642.3V628Q1560.3,626.2 1562.2,626.2H1564.9V625Q1564.9,623.4 1566.6,623.4H1573.4Q1575,623.4 1575,625V627.6H1577Q1578.7,627.6 1578.7,629.4V645.8Q1578.7,651.3 1573.3,651.3H1565.2Q1563,651.3 1561.4,649.8L1552.4,641.2Q1551,639.8 1552.3,638.4T1555.4,638.2L1560.3,641.4" fill="none" stroke="#6e8192" stroke-width="2.4" stroke-linejoin="round"/><path d="M1563.2,626.6h3.5v11.1h-3.5zM1568.3,624h3.5v13.7h-3.5zM1573.2,626h3.5v11.7h-3.5z" fill="#6e8192" opacity=".92"/><path d="M1614.1,623.4L1630.9,638.3H1626.3V651.7H1617.6V642.7H1610.6V651.7H1601.9V638.3H1597.3Z" fill="#6e8192"/><path d="M1654.4,623V647M1646.2,638.6L1654.4,646.8L1662.6,638.6M1639.4,645.5V649.5Q1639.4,653.4 1643.4,653.4H1665.5Q1669.5,653.4 1669.5,649.5V645.5" fill="none" stroke="#6e8192" stroke-width="2.5" stroke-linecap="round" stroke-linejoin="round"/></g>
<g transform="translate(1024,0)"><circle cx="1437.8" cy="637.8" r="12.4" fill="none" stroke="#6e8192" stroke-width="3"/><path d="M1430.8,637.8H1444.8M1437.8,630.8V644.8" stroke="#6e8192" stroke-width="2.6"/><circle cx="1477.7" cy="637.8" r="12.4" fill="none" stroke="#6e8192" stroke-width="3"/><path d="M1470.7,637.8H1484.7" stroke="#6e8192" stroke-width="2.6"/><circle cx="1520" cy="634.1" r="9.2" fill="none" stroke="#008ffb" stroke-width="3.4"/><path d="M1526.8,641.6L1537.4,650.6" stroke="#008ffb" stroke-width="3.8"/><path d="M1515.6,634.1H1524.4M1520,629.7V638.5" stroke="#008ffb" stroke-width="1.8"/><path d="M1560.3,642.3V628Q1560.3,626.2 1562.2,626.2H1564.9V625Q1564.9,623.4 1566.6,623.4H1573.4Q1575,623.4 1575,625V627.6H1577Q1578.7,627.6 1578.7,629.4V645.8Q1578.7,651.3 1573.3,651.3H1565.2Q1563,651.3 1561.4,649.8L1552.4,641.2Q1551,639.8 1552.3,638.4T1555.4,638.2L1560.3,641.4" fill="none" stroke="#6e8192" stroke-width="2.4" stroke-linejoin="round"/><path d="M1563.2,626.6h3.5v11.1h-3.5zM1568.3,624h3.5v13.7h-3.5zM1573.2,626h3.5v11.7h-3.5z" fill="#6e8192" opacity=".92"/><path d="M1614.1,623.4L1630.9,638.3H1626.3V651.7H1617.6V642.7H1610.6V651.7H1601.9V638.3H1597.3Z" fill="#6e8192"/><path d="M1654.4,623V647M1646.2,638.6L1654.4,646.8L1662.6,638.6M1639.4,645.5V649.5Q1639.4,653.4 1643.4,653.4H1665.5Q1669.5,653.4 1669.5,649.5V645.5" fill="none" stroke="#6e8192" stroke-width="2.5" stroke-linecap="round" stroke-linejoin="round"/></g>
</svg>
<span class="t" id="th1" style="left:745.5px;top:1352.5px;font-size:29px;font-weight:700;color:#0e0e1c;transform:scaleX(0.9390);letter-spacing:0.100px;">GROUP</span>
<svg style="left:860px;top:1340px" width="48" height="48" viewBox="860 1340 48 48"><path d="M883,1346.3V1369.5M876.6,1362.7L883,1369.9L889.4,1362.7M874.5,1358.8H871.6Q865.6,1358.8 865.6,1364.8V1375.3Q865.6,1381.3 871.6,1381.3H894.3Q900.3,1381.3 900.3,1375.3V1364.8Q900.3,1358.8 894.3,1358.8H891.5" fill="none" stroke="#15151f" stroke-width="2.8" stroke-linecap="round" stroke-linejoin="round"/></svg>
<span class="t" id="th2" style="left:1465.0px;top:1348.8px;font-size:28.9px;font-weight:700;color:#0e0e1c;transform:scaleX(0.9682);letter-spacing:0.071px;">INCREMENTAL LTV</span>
<span class="t" id="th3" style="left:1838.0px;top:1348.8px;font-size:28.9px;font-weight:700;color:#0e0e1c;transform:scaleX(0.9665);letter-spacing:0.142px;">CUSTOMER</span>
<span class="t" id="th4" style="left:2218.5px;top:1348.8px;font-size:28.9px;font-weight:700;color:#0e0e1c;transform:scaleX(0.9650);">INCREMENTAL REVENUE / CUSTOMER</span>
<div class="abs" style="left:721px;top:1413.5px;width:2047px;height:2px;background:#dedee2"></div>
</main>
<div class="abs" style="left:0;top:1372px;width:2794px;height:56px;background:linear-gradient(180deg,rgba(0,0,0,0),rgba(0,0,0,.062));pointer-events:none"></div>
</body></html>
